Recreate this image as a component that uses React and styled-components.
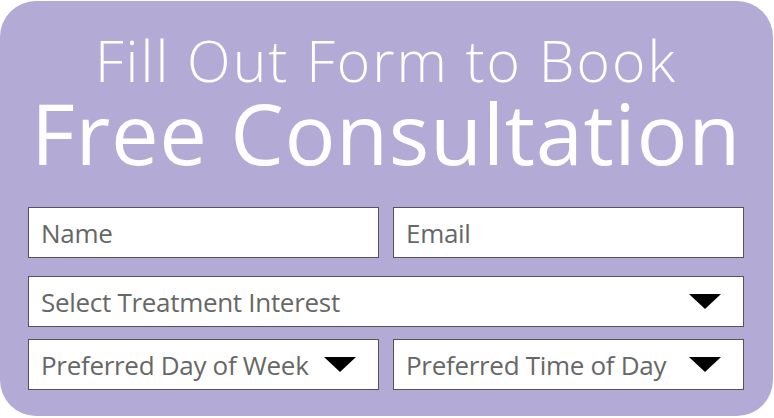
import styled, { createGlobalStyle } from "styled-components";

const GlobalStyle = createGlobalStyle`
    html, body {
        margin: 0;
        padding: 0;
        background: #ffffff;
    }
`;

const Card = styled.div`
    box-sizing: border-box;
    width: 773px;
    height: 415px;
    margin-top: 1px;
    background: #b3aad6;
    border-radius: 36px;
    padding: 24px 29px 0 28px;
    font-family: "Open Sans", "Noto Sans", sans-serif;
    color: #ffffff;
`;

const Heading = styled.div`
    text-align: center;
    display: flex;
    flex-direction: column;
    align-items: center;
    white-space: nowrap;
`;

const SubTitle = styled.div`
    font-size: 57px;
    font-weight: 300;
    line-height: 70px;
    letter-spacing: 2px;
`;

const Title = styled.div`
    font-size: 85px;
    font-weight: 500;
    line-height: 74px;
    letter-spacing: 0.6px;
`;

const Fields = styled.div`
    margin-top: 38px;
    display: grid;
    grid-template-columns: 1fr 1fr;
    column-gap: 14px;
    row-gap: 12px;
`;

const Field = styled.div`
    box-sizing: border-box;
    height: 51px;
    background: #ffffff;
    border: 1px solid #55525e;
    display: flex;
    align-items: center;
    justify-content: space-between;
    padding: 0 22px 0 12px;
    grid-column: ${({ $wide }) => ($wide ? "1 / span 2" : "auto")};
    margin-top: ${({ $gapAbove }) => $gapAbove || 0}px;
    color: #676767;
    font-size: 26px;
    letter-spacing: -0.3px;
    white-space: nowrap;
`;

const Arrow = styled.span`
    flex: none;
    width: 0;
    height: 0;
    border-left: 16px solid transparent;
    border-right: 16px solid transparent;
    border-top: 15px solid #000000;
`;

const App = () => {
    return (
        <>
            <GlobalStyle />
            <Card>
                <Heading>
                    <SubTitle>Fill Out Form to Book</SubTitle>
                    <Title>Free Consultation</Title>
                </Heading>
                <Fields>
                    <Field>Name</Field>
                    <Field>Email</Field>
                    <Field $wide $gapAbove={6}>
                        Select Treatment Interest
                        <Arrow />
                    </Field>
                    <Field>
                        Preferred Day of Week
                        <Arrow />
                    </Field>
                    <Field>
                        Preferred Time of Day
                        <Arrow />
                    </Field>
                </Fields>
            </Card>
        </>
    );
};

export default App;
